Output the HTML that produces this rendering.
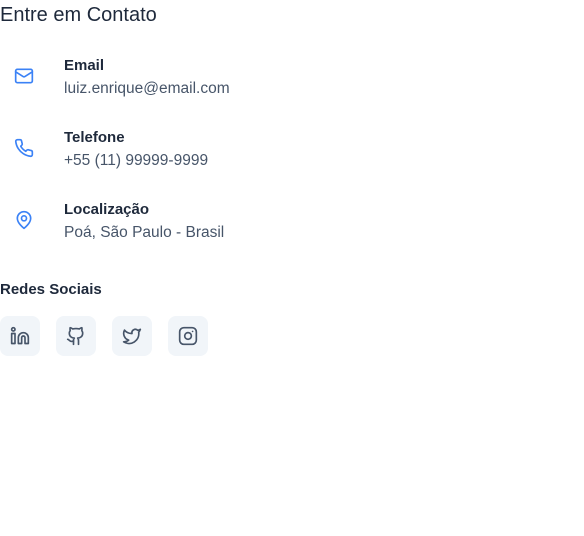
<!DOCTYPE html>
<html><head><meta charset="utf-8"><style>
body{margin:0;background:#fff;font-family:"Liberation Sans",sans-serif;width:584px;height:536px;position:relative;overflow:hidden}
.a{position:absolute}
h2{position:absolute;left:0;top:4px;margin:0;font-size:20px;font-weight:500;color:#1e293b}
.ic{position:absolute;left:0;width:48px;height:48px;display:flex;align-items:center;justify-content:center}
.t{position:absolute;left:64px;font-size:15px;font-weight:bold;color:#1e293b}
.v{position:absolute;left:64px;font-size:15.5px;color:#475569}
.s{position:absolute;top:316px;width:40px;height:40px;border-radius:8px;background:#f1f5f9;display:flex;align-items:center;justify-content:center}
svg{fill:none;stroke-linecap:round;stroke-linejoin:round}
</style></head><body>
<h2>Entre em Contato</h2>
<div class="ic" style="top:52px"><svg width="20" height="20" viewBox="0 0 24 24" stroke="#3b82f6" stroke-width="2"><rect x="2" y="4" width="20" height="16" rx="2"/><path d="m22 7-8.97 5.7a1.94 1.94 0 0 1-2.06 0L2 7"/></svg></div>
<div class="t" style="top:57px">Email</div><div class="v" style="top:80px">luiz.enrique@email.com</div>
<div class="ic" style="top:124px"><svg width="20" height="20" viewBox="0 0 24 24" stroke="#3b82f6" stroke-width="2"><path d="M22 16.92v3a2 2 0 0 1-2.18 2 19.790 19.79 0 0 1-8.63-3.07 19.5 19.5 0 0 1-6-6 19.79 19.79 0 0 1-3.07-8.67A2 2 0 0 1 4.11 2h3a2 2 0 0 1 2 1.72c.13.96.36 1.9.7 2.81a2 2 0 0 1-.45 2.11L8.09 9.910a16 16 0 0 0 6 6l1.27-1.27a2 2 0 0 1 2.11-.45c.91.34 1.85.57 2.81.7A2 2 0 0 1 22 16.92z"/></svg></div>
<div class="t" style="top:129px">Telefone</div><div class="v" style="top:152px">+55 (11) 99999-9999</div>
<div class="ic" style="top:196px"><svg width="20" height="20" viewBox="0 0 24 24" stroke="#3b82f6" stroke-width="2"><path d="M20 10c0 6-8 12-8 12s-8-6-8-12a8 8 0 0 1 16 0Z"/><circle cx="12" cy="10" r="3"/></svg></div>
<div class="t" style="top:201px">Localização</div><div class="v" style="top:224px">Poá, São Paulo - Brasil</div>
<div class="a" style="top:281px;left:0;font-size:15px;font-weight:bold;color:#1e293b">Redes Sociais</div>
<div class="s" style="left:0"><svg width="20" height="20" viewBox="0 0 24 24" stroke="#475569" stroke-width="2"><path d="M16 8a6 6 0 0 1 6 6v7h-4v-7a2 2 0 0 0-4 0v7h-4v-7a6 6 0 0 1 6-6z"/><rect x="2" y="9" width="4" height="12"/><circle cx="4" cy="4" r="2"/></svg></div>
<div class="s" style="left:56px"><svg width="20" height="20" viewBox="0 0 24 24" stroke="#475569" stroke-width="2"><path d="M15 22v-4a4.8 4.8 0 0 0-1-3.5c3 0 6-2 6-5.5.08-1.25-.27-2.48-1-3.5.28-1.15.28-2.35 0-3.5 0 0-1 0-3 1.5-2.64-.5-5.36-.5-8 0C6 2 5 2 5 2c-.3 1.15-.3 2.35 0 3.5A5.4 5.4 0 0 0 4 9c0 3.5 3 5.5 6 5.5-.39.49-.68 1.05-.85 1.65-.17.6-.22 1.23-.15 1.850v4"/><path d="M9 18c-4.51 2-5-2-7-2"/></svg></div>
<div class="s" style="left:112px"><svg width="20" height="20" viewBox="0 0 24 24" stroke="#475569" stroke-width="2"><path d="M22 4s-.7 2.1-2 3.4c1.6 10-9.4 17.3-18 11.6 2.2.1 4.4-.6 6-2C3 15.5.5 9.6 3 5c2.2 2.6 5.6 4.1 9 4-.9-4.2 4-6.6 7-3.8 1.1 0 3-1.2 3-1.2z"/></svg></div>
<div class="s" style="left:168px"><svg width="20" height="20" viewBox="0 0 24 24" stroke="#475569" stroke-width="2"><rect x="2" y="2" width="20" height="20" rx="5"/><path d="M16 11.37A4 4 0 1 1 12.63 8 4 4 0 0 1 16 11.37z"/><line x1="17.5" y1="6.5" x2="17.51" y2="6.5"/></svg></div>
</body></html>
